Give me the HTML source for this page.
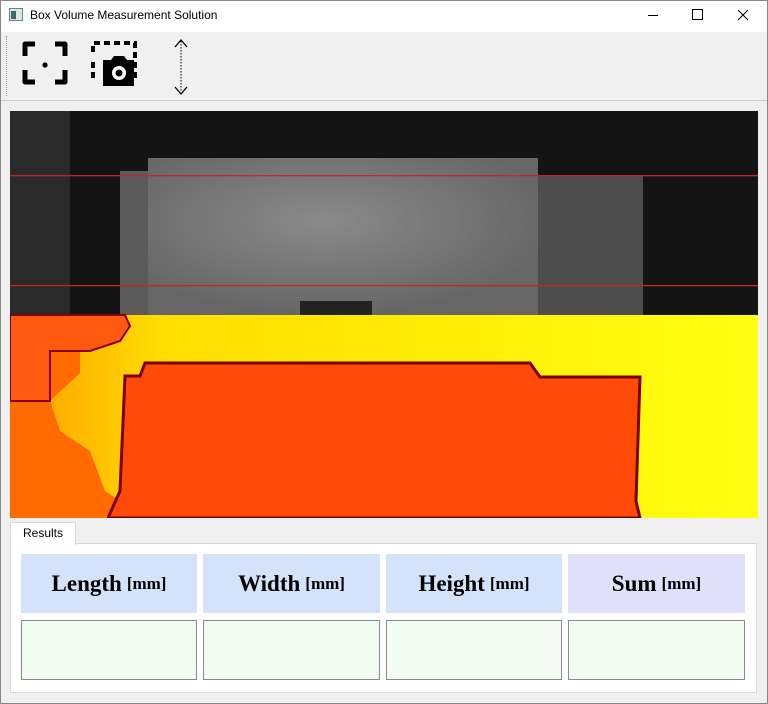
<!DOCTYPE html><html><head><style>
body{margin:0;width:768px;height:704px;background:#f0f0f0;font-family:"Liberation Sans",sans-serif;position:relative;overflow:hidden}
.abs{position:absolute}
.h{position:absolute;top:554px;height:59px;background:#d5e3fa;font-family:"Liberation Serif",serif;font-weight:bold;font-size:23px;display:flex;align-items:center;justify-content:center}
.h small{font-size:17px;margin-left:5px}
.v{position:absolute;top:620px;height:58px;background:#f2fcf2;border:1px solid #8a8a8a}
</style></head><body>
<div class="abs" style="left:0;top:0;width:766px;height:702px;border:1px solid #888"></div>
<div class="abs" style="left:1px;top:1px;width:766px;height:31px;background:#fff"></div>
<svg class="abs" style="left:9px;top:8px" width="14" height="14"><rect x="0.5" y="0.5" width="13" height="12" fill="#dfe6e6" stroke="#6b7f86"/><rect x="2" y="3" width="5" height="8" fill="#3c6a6c"/></svg>
<div class="abs" style="left:30px;top:8px;font-size:12px;color:#000">Box Volume Measurement Solution</div>
<div class="abs" style="left:648px;top:15px;width:10px;height:1px;background:#000"></div>
<div class="abs" style="left:692px;top:9px;width:9px;height:9px;border:1px solid #000"></div>
<svg class="abs" style="left:737px;top:9px" width="12" height="12"><path d="M1 1L11 11M11 1L1 11" stroke="#000"/></svg>
<div class="abs" style="left:6px;top:36px;height:60px;border-left:1px dotted #999"></div>
<svg class="abs" style="left:20px;top:38px" width="180" height="60">
<path d="M5 18V6H15M35 6H45V18M45 32V44H35M15 44H5V32" fill="none" stroke="#000" stroke-width="5" stroke-linejoin="round"/>
<circle cx="25" cy="27" r="2.6"/>
<path d="M73 14V5H115V44M73 24V44" fill="none" stroke="#000" stroke-width="4" stroke-dasharray="6 4"/>
<path d="M83 22h8l3-4h10l3 4h7v26h-31z" fill="#000"/><circle cx="99" cy="35" r="7" fill="#fff"/><circle cx="99" cy="35" r="3.5" fill="#000"/>
<path d="M161 3V54" stroke="#000" stroke-dasharray="1.5 1.5"/><path d="M155 9L161 2L167 9M155 49L161 56L167 49" fill="none" stroke="#000" stroke-width="1.3"/>
</svg>
<div class="abs" style="left:1px;top:100px;width:766px;height:1px;background:#ccc"></div>
<svg class="abs" style="left:10px;top:111px" width="748" height="407">
<defs><radialGradient id="g" cx="0.45" cy="0.4" r="0.6"><stop offset="0" stop-color="#8a8a8a"/><stop offset="1" stop-color="#666"/></radialGradient>
<linearGradient id="y" x1="0" x2="1"><stop offset="0" stop-color="#ff9a00"/><stop offset="0.2" stop-color="#ffdd00"/><stop offset="1" stop-color="#ffff10"/></linearGradient></defs>
<rect width="748" height="204" fill="#141414"/>
<rect x="0" y="0" width="60" height="204" fill="#2a2a2a"/>
<rect x="525" y="65" width="108" height="139" fill="#4d4d4d"/>
<rect x="110" y="60" width="40" height="144" fill="#5a5a5a"/>
<rect x="138" y="47" width="390" height="157" fill="url(#g)"/>
<rect x="290" y="190" width="72" height="14" fill="#222"/>
<rect y="64" width="748" height="1.3" fill="#d02020"/><rect y="174" width="748" height="1.3" fill="#d02020"/>
<rect y="204" width="748" height="203" fill="url(#y)"/>
<path d="M0 204H40L35 220L70 232V262L40 290L50 320L80 340L95 380L110 390L95 407H0Z" fill="#ff6a00"/>
<path d="M0 204H115L120 215L110 230L80 240H40V290H0Z" fill="#ff5a10" stroke="#800" stroke-width="2"/>
<path d="M135 252H520L530 266H630L626 390L630 407H98L110 380L115 265H130Z" fill="#ff4a08" stroke="#7a0000" stroke-width="3"/>
</svg>
<div class="abs" style="left:10px;top:543px;width:745px;height:148px;background:#fff;border:1px solid #d9d9d9"></div>
<div class="abs" style="left:10px;top:522px;width:64px;height:22px;background:#fff;border:1px solid #d9d9d9;border-bottom:none;font-size:12px;text-align:center;line-height:21px">Results</div>
<div class="h" style="left:21px;width:176px">Length<small>[mm]</small></div>
<div class="h" style="left:203px;width:177px">Width<small>[mm]</small></div>
<div class="h" style="left:386px;width:176px">Height<small>[mm]</small></div>
<div class="h" style="left:568px;width:177px;background:#e0e0fb">Sum<small>[mm]</small></div>
<div class="v" style="left:21px;width:174px"></div>
<div class="v" style="left:203px;width:175px"></div>
<div class="v" style="left:386px;width:174px"></div>
<div class="v" style="left:568px;width:175px"></div>
</body></html>
